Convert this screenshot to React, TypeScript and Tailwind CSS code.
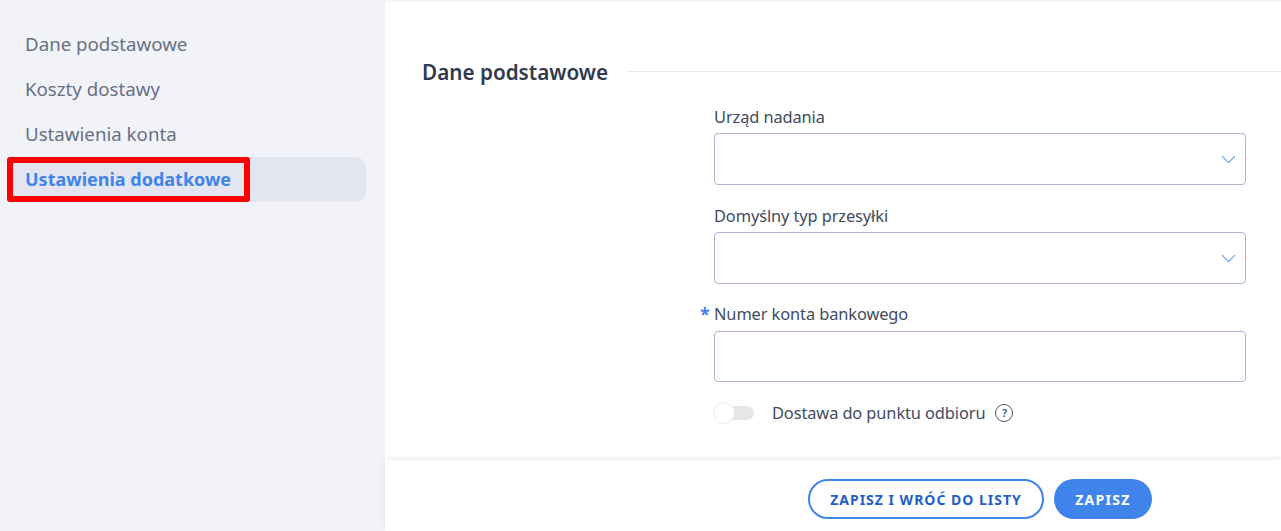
import { ChevronDown } from "lucide-react";

const font = "font-['Noto_Sans',sans-serif]";

function SideLink({ label }: { label: string }) {
  return <div className="h-[45px] pl-[25px] flex items-center text-[18.7px] text-[#667085]">{label}</div>;
}

function SelectField({ label }: { label: string }) {
  return (
    <div className="w-[532px]">
      <div className="h-[29px] pt-[1px] text-[16.4px] tracking-[-0.1px] text-[#414b5f] leading-[24px]">{label}</div>
      <div className="h-[52px] border border-[#a9b5cf] rounded-[4px] flex items-center justify-end pr-[4px] bg-white">
        <ChevronDown className="w-[25px] h-[25px] text-[#5c9bf0]" strokeWidth={1} />
      </div>
    </div>
  );
}

export default function App() {
  return (
    <div className={`${font} w-[1281px] h-[531px] flex bg-white overflow-hidden`}>
      <aside className="w-[385px] h-full bg-[#f2f3f8] pt-[22px] pl-[8px] pr-[19px]">
        <div className="-ml-[8px]">
          <SideLink label="Dane podstawowe" />
          <SideLink label="Koszty dostawy" />
          <SideLink label="Ustawienia konta" />
        </div>
        <div className="relative h-[45px] bg-[#e3e6f0] rounded-[10px] pl-[17px] flex items-center text-[18px] font-bold text-[#3f84ea]">
          Ustawienia dodatkowe
          <div className="absolute -left-[1px] top-0 w-[243px] h-[45px] border-[6px] border-[#ff0000] rounded-[3px]" />
        </div>
      </aside>
      <main className="flex-1 flex flex-col">
        <div className="h-[2px] bg-[#f5f5f7]" />
        <section className="flex-1 pl-[37px] pt-[55px]">
          <div className="flex items-center h-[28px]">
            <h2 className="pt-[3px] text-[20.7px] font-semibold text-[#2f3a4f] whitespace-nowrap">Dane podstawowe</h2>
            <div className="flex-1 h-px bg-[#e8eaf0] ml-[19px]" />
          </div>
          <div className="pl-[292px] pt-[19px] flex flex-col gap-[18px]">
            <SelectField label="Urząd nadania" />
            <SelectField label="Domyślny typ przesyłki" />
            <div className="w-[532px]">
              <div className="relative h-[29px] text-[16.4px] tracking-[-0.1px] text-[#414b5f] leading-[24px]">
                <span className="absolute -left-[14px] top-0 text-[18px] text-[#3f84ea] font-bold">*</span>
                Numer konta bankowego
              </div>
              <div className="h-[51px] border border-[#a9b5cf] rounded-[4px] bg-white" />
            </div>
          </div>
          <div className="pl-[292px] mt-[19px] flex items-center h-[24px]">
            <div className="relative w-[40px] h-[14px] rounded-full bg-[#e6e6e6]">
              <div className="absolute -left-[1px] -top-[4px] w-[22px] h-[22px] rounded-full bg-white border border-[#ececec]" />
            </div>
            <span className="ml-[18px] text-[16.4px] tracking-[-0.1px] text-[#414b5f]">Dostawa do punktu odbioru</span>
            <span className="ml-[10px] w-[18px] h-[18px] rounded-full border-[1.5px] border-[#4b5568] flex items-center justify-center text-[11px] font-semibold text-[#4b5568]">?</span>
          </div>
        </section>
        <footer className="h-[71px] pt-[7px] shadow-[0_-2px_6px_rgba(0,0,0,0.07)] flex items-center pl-[423px] gap-[10px] bg-white">
          <button className="h-[40px] w-[236px] rounded-full border-2 border-[#3f84ea] text-[#1f5fc7] text-[14px] font-bold tracking-[1px]">ZAPISZ I WRÓĆ DO LISTY</button>
          <button className="h-[40px] w-[98px] rounded-full bg-[#3f84ea] text-white text-[14px] font-bold tracking-[1.3px]">ZAPISZ</button>
        </footer>
      </main>
    </div>
  );
}
